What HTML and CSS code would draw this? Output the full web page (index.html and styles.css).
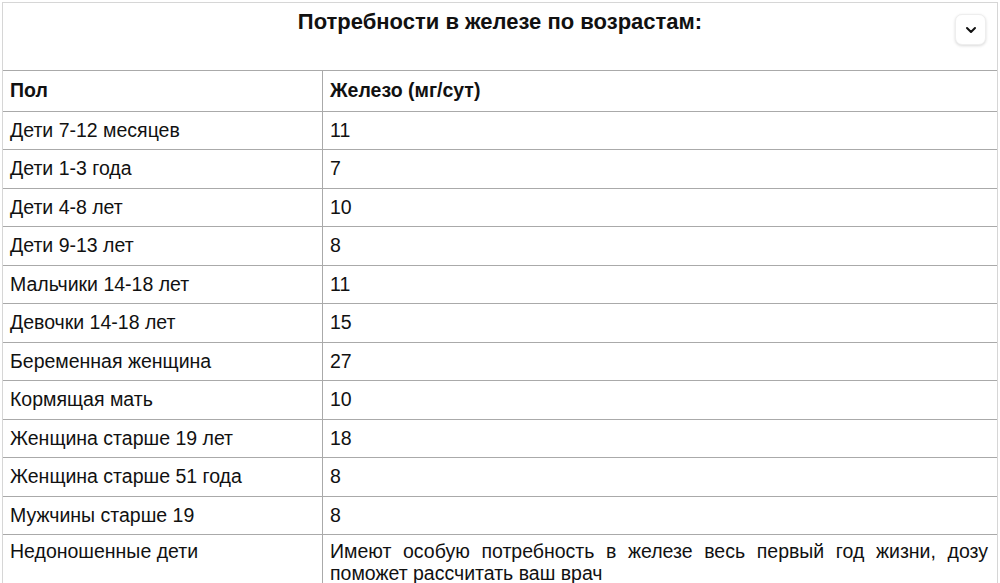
FILE: index.html
```html
<!DOCTYPE html>
<html lang="ru">
<head>
<meta charset="utf-8">
<link rel="stylesheet" href="styles.css">
</head>
<body>
<div class="panel">
  <div class="panel-head">
    <h2 class="title">Потребности в железе по возрастам:</h2>
    <button class="toggle" aria-label="Свернуть">
      <svg width="12" height="8" viewBox="0 0 12 8"><path d="M2 2l4 4 4-4" fill="none" stroke="#111" stroke-width="2" stroke-linecap="round" stroke-linejoin="round"/></svg>
    </button>
  </div>
  <table class="iron">
    <thead>
      <tr><th>Пол</th><th>Железо (мг/сут)</th></tr>
    </thead>
    <tbody>
      <tr><td>Дети 7-12 месяцев</td><td>11</td></tr>
      <tr><td>Дети 1-3 года</td><td>7</td></tr>
      <tr><td>Дети 4-8 лет</td><td>10</td></tr>
      <tr><td>Дети 9-13 лет</td><td>8</td></tr>
      <tr><td>Мальчики 14-18 лет</td><td>11</td></tr>
      <tr><td>Девочки 14-18 лет</td><td>15</td></tr>
      <tr><td>Беременная женщина</td><td>27</td></tr>
      <tr><td>Кормящая мать</td><td>10</td></tr>
      <tr><td>Женщина старше 19 лет</td><td>18</td></tr>
      <tr><td>Женщина старше 51 года</td><td>8</td></tr>
      <tr><td>Мужчины старше 19</td><td>8</td></tr>
      <tr class="long"><td>Недоношенные дети</td><td class="just">Имеют особую потребность в железе весь первый год жизни, дозу поможет рассчитать ваш врач</td></tr>
    </tbody>
  </table>
</div>
</body>
</html>
```
FILE: styles.css
```css
html, body {
  margin: 0;
  padding: 0;
  background: #fff;
}
body {
  font-family: "Liberation Sans", Arial, sans-serif;
  color: #111;
  overflow: hidden;
}
.panel {
  margin: 2px 2px 0 2px;
  border: 1px solid #d6d6d6;
  border-bottom: none;
}
.panel-head {
  position: relative;
  height: 67px;
}
.title {
  margin: 0;
  padding-top: 7px;
  text-align: center;
  font-size: 22px;
  font-weight: bold;
  line-height: 24px;
}
.toggle {
  position: absolute;
  top: 11px;
  right: 11px;
  width: 31px;
  height: 31px;
  border: 1px solid #eee;
  border-radius: 7px;
  background: #fff;
  box-shadow: 0 1px 3px rgba(0,0,0,0.15);
  display: flex;
  align-items: center;
  justify-content: center;
  padding: 0;
}
.iron {
  width: 100%;
  border-collapse: collapse;
  font-size: 19.5px;
  line-height: 19.5px;
}
.iron th, .iron td {
  border: 1px solid #aaa;
  padding: 9px 9px 9px 7px;
  text-align: left;
  vertical-align: top;
}
.iron th {
  font-weight: bold;
  padding-top: 10px;
  padding-bottom: 10px;
}
.iron th:first-child, .iron td:first-child {
  width: 303px;
  border-left: none;
}
.iron th:last-child, .iron td:last-child {
  border-right: none;
}
.iron tr.long td {
  padding-top: 7px;
}
.iron tr.long td.just {
  text-align: justify;
  line-height: 22px;
  padding-top: 5px;
}
```
